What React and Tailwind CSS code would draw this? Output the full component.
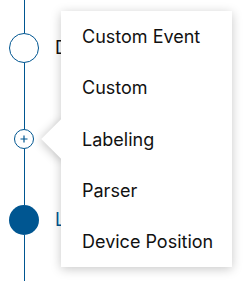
import React from "react";

const items = ["Custom Event", "Custom", "Labeling", "Parser", "Device Position"];

function Segment({ h }) {
  return <div className="w-px bg-[#005691]" style={{ height: h }} />;
}

export default function App() {
  return (
    <div className="relative w-[251px] h-[281px] bg-white overflow-hidden font-['Inter',sans-serif] text-[18px] text-[#111]">
      {/* Timeline */}
      <div className="flex flex-col">
        <div className="flex flex-col items-center w-[48px]">
          <Segment h={33} />
        </div>
        <div className="flex items-center">
          <div className="w-[48px] flex justify-center">
            <div className="w-[30px] h-[30px] rounded-full border-[1.5px] border-[#005691] bg-white" />
          </div>
          <span className="ml-[7px] leading-none">Data Source</span>
        </div>
        <div className="flex flex-col items-center w-[48px]">
          <Segment h={66} />
          <div className="w-[20px] h-[20px] rounded-full border border-[#005691] bg-white flex items-center justify-center">
            <svg width="10" height="10" viewBox="0 0 10 10">
              <path d="M5 1.5v7M1.5 5h7" stroke="#005691" strokeWidth="1.2" />
            </svg>
          </div>
          <Segment h={56} />
        </div>
        <div className="flex items-center">
          <div className="w-[48px] flex justify-center">
            <div className="w-[30px] h-[30px] rounded-full bg-[#005691]" />
          </div>
          <span className="ml-[7px] leading-none text-[#005691]">Labeling</span>
        </div>
        <div className="flex flex-col items-center w-[48px]">
          <Segment h={46} />
        </div>
      </div>

      {/* Popover menu */}
      <div className="absolute left-[61px] top-[11px] w-[171px] h-[256px] shadow-[0_2px_10px_rgba(0,0,0,0.22)]" />
      <div className="absolute left-[47px] top-[125px] w-[28px] h-[28px] rotate-45 bg-white shadow-[0_2px_10px_rgba(0,0,0,0.22)]" />
      <div className="absolute left-[61px] top-[11px] w-[171px] h-[256px] bg-white flex flex-col">
        {items.map((item) => (
          <div key={item} className="flex-1 flex items-center pl-[21px]">
            {item}
          </div>
        ))}
      </div>
    </div>
  );
}
